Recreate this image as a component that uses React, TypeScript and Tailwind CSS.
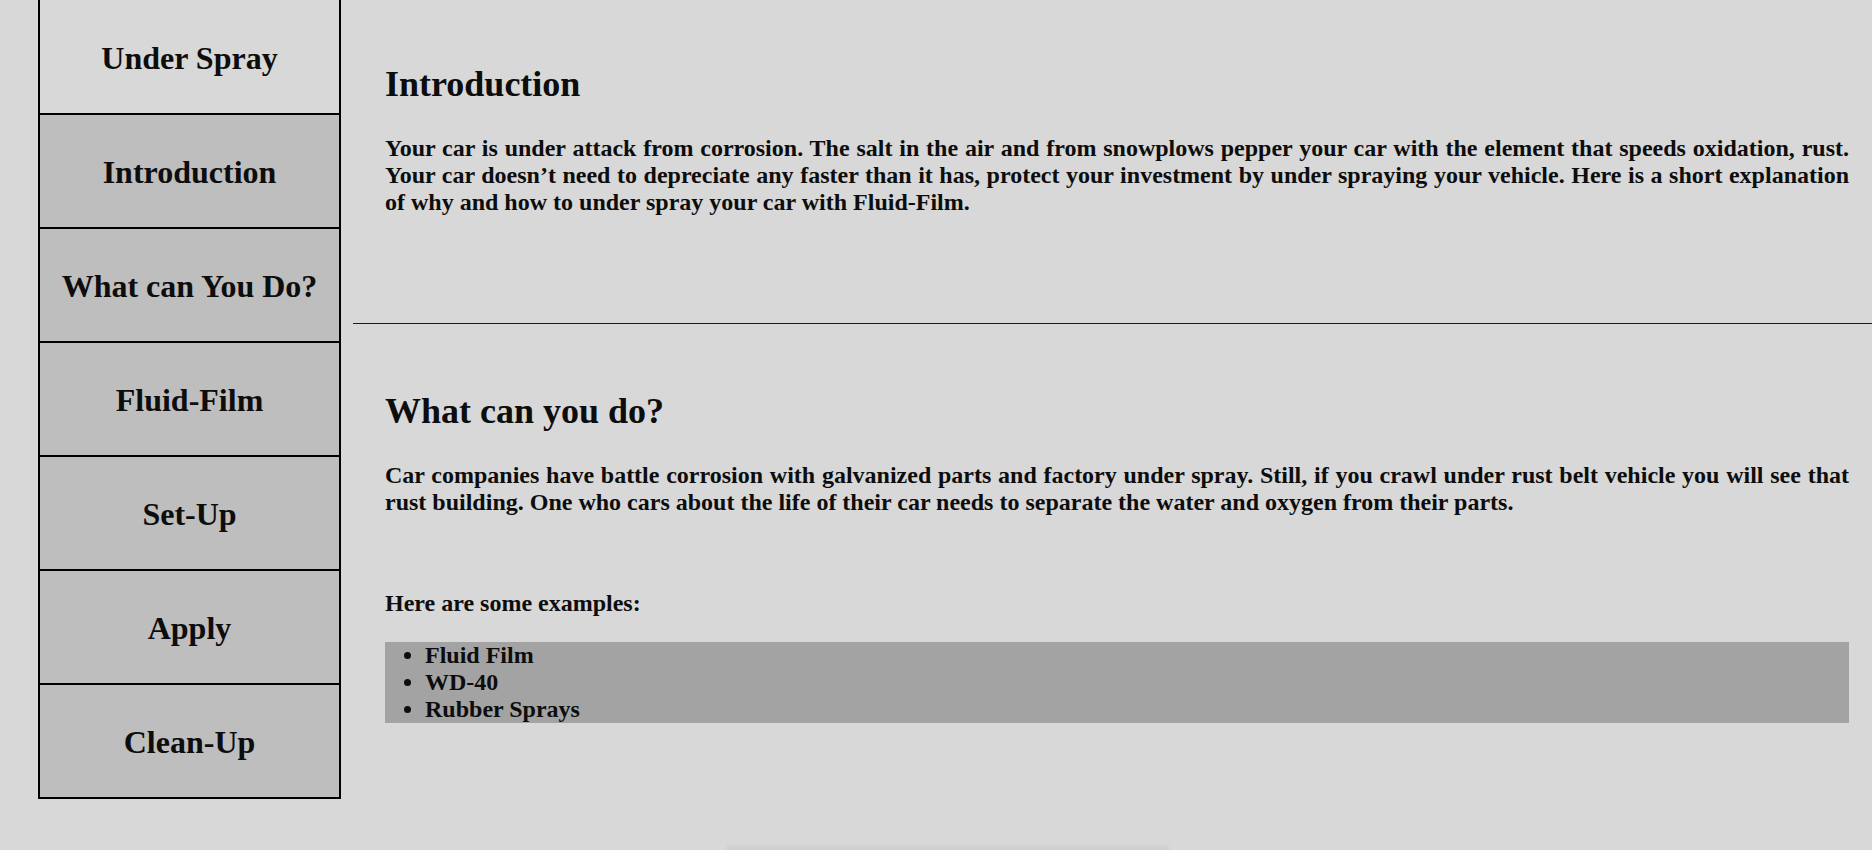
import React from 'react';

const navItems = ['Introduction', 'What can You Do?', 'Fluid-Film', 'Set-Up', 'Apply', 'Clean-Up'];

const examples = ['Fluid Film', 'WD-40', 'Rubber Sprays'];

function NavBox({ label, title = false }: { label: string; title?: boolean }) {
    return (
        <div
            className={`flex items-center justify-center border-b-2 border-black pt-[3px] text-[32px] leading-[37px] ${
                title ? 'h-[115px] bg-[#d8d8d8]' : 'h-[114px] bg-[#bebebe]'
            }`}
        >
            {label}
        </div>
    );
}

export default function App() {
    return (
        <div className="relative flex min-h-[850px] bg-[#d8d8d8] font-['Liberation_Serif','Times_New_Roman',serif] font-bold text-[#0d0d0d]">
            {/* side menu */}
            <nav className="ml-[38px] flex w-[303px] shrink-0 flex-col self-start border-x-2 border-black">
                <NavBox label="Under Spray" title />
                {navItems.map((item) => (
                    <NavBox key={item} label={item} />
                ))}
            </nav>

            <main className="ml-[12px] flex-1">
                <section className="pb-[107px] pl-[32px] pr-[23px] pt-[63px]">
                    <h1 className="text-[36px] leading-[42px]">Introduction</h1>
                    <p className="mt-[30px] text-justify text-[24px] leading-[27px]">
                        Your car is under attack from corrosion. The salt in the air and from snowplows pepper your car
                        with the element that speeds oxidation, rust. Your car doesn’t need to depreciate any faster than
                        it has, protect your investment by under spraying your vehicle. Here is a short explanation of
                        why and how to under spray your car with Fluid-Film.
                    </p>
                </section>

                <hr className="border-0 border-t border-[#1a1a1a]" />

                <section className="pl-[32px] pr-[23px] pt-[66px]">
                    <h2 className="text-[36px] leading-[42px]">What can you do?</h2>
                    <p className="mt-[30px] text-justify text-[24px] leading-[27px]">
                        Car companies have battle corrosion with galvanized parts and factory under spray. Still, if you
                        crawl under rust belt vehicle you will see that rust building. One who cars about the life of
                        their car needs to separate the water and oxygen from their parts.
                    </p>
                    <p className="mt-[74px] text-[24px] leading-[27px]">Here are some examples:</p>
                    <ul className="mt-[25px] list-disc bg-[#a3a3a3] pl-[40px] text-[24px] leading-[27px]">
                        {examples.map((ex) => (
                            <li key={ex}>{ex}</li>
                        ))}
                    </ul>
                </section>
            </main>

            {/* faint shadow of a bar peeking in at the bottom */}
            <div className="fixed bottom-0 left-[727px] h-[6px] w-[442px] bg-gradient-to-b from-[#d6d6d6] to-[#cecece]" />
        </div>
    );
}
